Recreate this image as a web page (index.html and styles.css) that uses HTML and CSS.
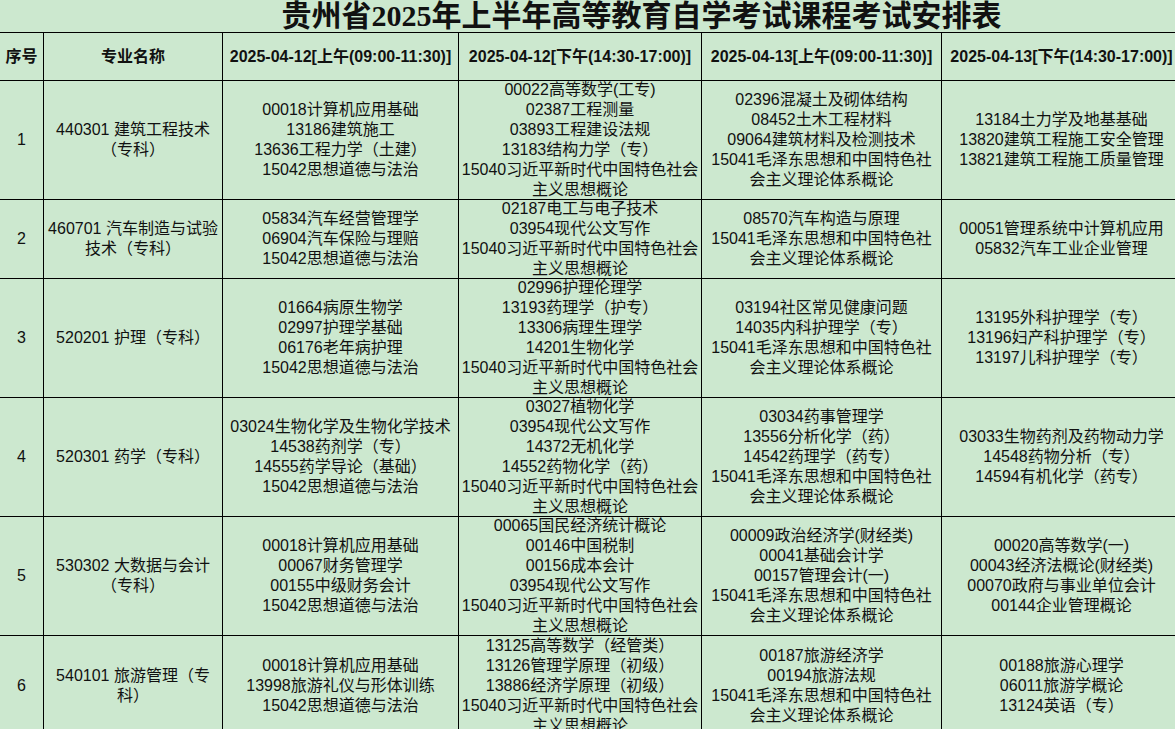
FILE: index.html
```html
<!DOCTYPE html>
<html lang="zh-CN">
<head>
<meta charset="utf-8">
<title>贵州省2025年上半年高等教育自学考试课程考试安排表</title>
<link rel="stylesheet" href="styles.css">
</head>
<body>
<div class="sheet">
  <h1 class="title">贵州省2025年上半年高等教育自学考试课程考试安排表</h1>
  <div class="grid">
    <div class="c head">序号</div>
    <div class="c head">专业名称</div>
    <div class="c head">2025-04-12[上午(09:00-11:30)]</div>
    <div class="c head">2025-04-12[下午(14:30-17:00)]</div>
    <div class="c head">2025-04-13[上午(09:00-11:30)]</div>
    <div class="c head">2025-04-13[下午(14:30-17:00)]</div>

    <div class="c">1</div>
    <div class="c">440301 建筑工程技术<br>（专科）</div>
    <div class="c">00018计算机应用基础<br>13186建筑施工<br>13636工程力学（土建）<br>15042思想道德与法治</div>
    <div class="c">00022高等数学(工专)<br>02387工程测量<br>03893工程建设法规<br>13183结构力学（专）<br>15040习近平新时代中国特色社会<br>主义思想概论</div>
    <div class="c">02396混凝土及砌体结构<br>08452土木工程材料<br>09064建筑材料及检测技术<br>15041毛泽东思想和中国特色社<br>会主义理论体系概论</div>
    <div class="c">13184土力学及地基基础<br>13820建筑工程施工安全管理<br>13821建筑工程施工质量管理</div>

    <div class="c">2</div>
    <div class="c">460701 汽车制造与试验<br>技术（专科）</div>
    <div class="c">05834汽车经营管理学<br>06904汽车保险与理赔<br>15042思想道德与法治</div>
    <div class="c">02187电工与电子技术<br>03954现代公文写作<br>15040习近平新时代中国特色社会<br>主义思想概论</div>
    <div class="c">08570汽车构造与原理<br>15041毛泽东思想和中国特色社<br>会主义理论体系概论</div>
    <div class="c">00051管理系统中计算机应用<br>05832汽车工业企业管理</div>

    <div class="c">3</div>
    <div class="c">520201 护理（专科）</div>
    <div class="c">01664病原生物学<br>02997护理学基础<br>06176老年病护理<br>15042思想道德与法治</div>
    <div class="c">02996护理伦理学<br>13193药理学（护专）<br>13306病理生理学<br>14201生物化学<br>15040习近平新时代中国特色社会<br>主义思想概论</div>
    <div class="c">03194社区常见健康问题<br>14035内科护理学（专）<br>15041毛泽东思想和中国特色社<br>会主义理论体系概论</div>
    <div class="c">13195外科护理学（专）<br>13196妇产科护理学（专）<br>13197儿科护理学（专）</div>

    <div class="c">4</div>
    <div class="c">520301 药学（专科）</div>
    <div class="c">03024生物化学及生物化学技术<br>14538药剂学（专）<br>14555药学导论（基础）<br>15042思想道德与法治</div>
    <div class="c">03027植物化学<br>03954现代公文写作<br>14372无机化学<br>14552药物化学（药）<br>15040习近平新时代中国特色社会<br>主义思想概论</div>
    <div class="c">03034药事管理学<br>13556分析化学（药）<br>14542药理学（药专）<br>15041毛泽东思想和中国特色社<br>会主义理论体系概论</div>
    <div class="c">03033生物药剂及药物动力学<br>14548药物分析（专）<br>14594有机化学（药专）</div>

    <div class="c">5</div>
    <div class="c">530302 大数据与会计<br>（专科）</div>
    <div class="c">00018计算机应用基础<br>00067财务管理学<br>00155中级财务会计<br>15042思想道德与法治</div>
    <div class="c">00065国民经济统计概论<br>00146中国税制<br>00156成本会计<br>03954现代公文写作<br>15040习近平新时代中国特色社会<br>主义思想概论</div>
    <div class="c">00009政治经济学(财经类)<br>00041基础会计学<br>00157管理会计(一)<br>15041毛泽东思想和中国特色社<br>会主义理论体系概论</div>
    <div class="c">00020高等数学(一)<br>00043经济法概论(财经类)<br>00070政府与事业单位会计<br>00144企业管理概论</div>

    <div class="c">6</div>
    <div class="c">540101 旅游管理（专<br>科）</div>
    <div class="c">00018计算机应用基础<br>13998旅游礼仪与形体训练<br>15042思想道德与法治</div>
    <div class="c">13125高等数学（经管类）<br>13126管理学原理（初级）<br>13886经济学原理（初级）<br>15040习近平新时代中国特色社会<br>主义思想概论</div>
    <div class="c">00187旅游经济学<br>00194旅游法规<br>15041毛泽东思想和中国特色社<br>会主义理论体系概论</div>
    <div class="c">00188旅游心理学<br>06011旅游学概论<br>13124英语（专）</div>
  </div>
</div>
</body>
</html>
```

FILE: styles.css
```css
html, body {
  margin: 0;
  padding: 0;
  overflow: hidden;
  background: #cce8cf;
}

.sheet {
  width: 1283px;
  color: #111;
  font-family: "Liberation Sans", "Noto Sans CJK SC", sans-serif;
}

.title {
  margin: 0;
  height: 32px;
  line-height: 32px;
  text-align: center;
  font-family: "Liberation Serif", "Noto Sans CJK SC", serif;
  font-size: 30px;
  font-weight: bold;
  white-space: nowrap;
}

.grid {
  display: grid;
  width: max-content;
  grid-template-columns: 43px 178px 235px 242px 239px 239px;
  grid-template-rows: 47px 118px 78px 118px 118px 118px 99px;
  gap: 1px;
  background: #000;
  border-top: 1px solid #000;
}

.c {
  background: #cce8cf;
  display: flex;
  flex-direction: column;
  justify-content: center;
  align-items: center;
  overflow: hidden;
  text-align: center;
  font-size: 16px;
  line-height: 20px;
  white-space: nowrap;
}

.head {
  font-weight: bold;
}
```
